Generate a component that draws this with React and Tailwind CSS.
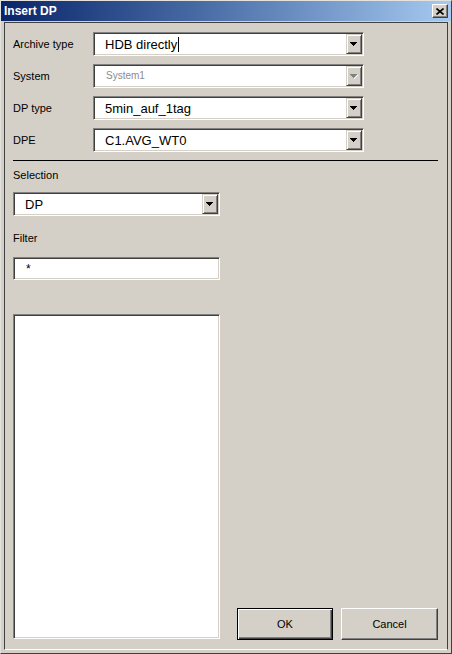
import React from 'react'

// sunken win2k field frame
const sunken =
  'border border-t-[#808080] border-l-[#808080] border-b-white border-r-white shadow-[inset_1px_1px_0_#404040,inset_-1px_-1px_0_#d4d0c8] bg-white p-[1px]'

function Arrow({ disabled }) {
  const c = disabled ? '#808080' : '#000000'
  return (
    <svg width="8" height="5" viewBox="0 0 8 5" shapeRendering="crispEdges">
      {disabled && (
        <g fill="#ffffff">
          <rect x="4" y="4" width="1" height="1" />
          <rect x="5" y="3" width="1" height="1" />
          <rect x="6" y="2" width="1" height="1" />
          <rect x="7" y="1" width="1" height="1" />
        </g>
      )}
      <g fill={c}>
        <rect x="0" y="0" width="7" height="1" />
        <rect x="1" y="1" width="5" height="1" />
        <rect x="2" y="2" width="3" height="1" />
        <rect x="3" y="3" width="1" height="1" />
      </g>
    </svg>
  )
}

function Combo({ className, children, disabled }) {
  return (
    <div className={`flex h-[24px] ${sunken} ${className}`}>
      <div className="flex-1 flex items-center min-w-0 overflow-hidden">{children}</div>
      <div className="w-[16px] h-full flex items-center justify-center bg-[#d4d0c8] border border-t-[#d4d0c8] border-l-[#d4d0c8] border-b-[#404040] border-r-[#404040] shadow-[inset_1px_1px_0_#ffffff,inset_-1px_-1px_0_#808080]">
        <Arrow disabled={disabled} />
      </div>
    </div>
  )
}

function Row({ label, children }) {
  return (
    <div className="flex items-center h-[24px]">
      <div className="w-[80px] text-[11px] leading-[13px] select-none">{label}</div>
      {children}
    </div>
  )
}

export default function App() {
  return (
    <div className="w-[452px] h-[654px] bg-[#d4d0c8] border border-t-[#e4e2dc] border-l-[#e4e2dc] border-r-[#404040] border-b-[#404040] flex flex-col font-['Liberation_Sans',Arial,sans-serif] text-black">
      {/* title bar */}
      <div className="h-[20px] flex items-center justify-between bg-gradient-to-r from-[#0a246a] to-[#a6caf0] pl-[3px] pr-[3px]">
        <span className="text-white text-[12px] font-bold leading-none select-none">Insert DP</span>
        <div className="w-[16px] h-[14px] flex items-center justify-center bg-[#d4d0c8] border border-t-white border-l-white border-b-[#404040] border-r-[#404040] shadow-[inset_-1px_-1px_0_#808080]">
          <svg width="8" height="7" viewBox="0 0 8 7">
            <path d="M0.5 0.5L7.5 6.5M7.5 0.5L0.5 6.5" stroke="#000" strokeWidth="1.6" />
          </svg>
        </div>
      </div>

      {/* body */}
      <div className="flex-1 mt-[1px] mx-[3px] mb-[3px] border border-t-[#404040] border-l-[#404040] border-r-[#404040] border-b-white flex flex-col pl-[8px] pt-[9px]">
        <div className="flex flex-col gap-[8px]">
          <Row label="Archive type">
            <Combo className="w-[271px]">
              <span className="pl-[10px] text-[13px] leading-none whitespace-nowrap">HDB directly</span>
              <span className="inline-block w-px h-[15px] bg-black ml-[1px]" />
            </Combo>
          </Row>
          <Row label="System">
            <Combo className="w-[271px]" disabled>
              <span className="pl-[11px] text-[10px] leading-none text-[#8c8c8c]">System1</span>
            </Combo>
          </Row>
          <Row label="DP type">
            <Combo className="w-[271px]">
              <span className="pl-[10px] text-[13px] leading-none">5min_auf_1tag</span>
            </Combo>
          </Row>
          <Row label="DPE">
            <Combo className="w-[271px]">
              <span className="pl-[10px] text-[13px] leading-none">C1.AVG_WT0</span>
            </Combo>
          </Row>
        </div>

        <div className="mt-[8px] h-px w-[425px] bg-black" />

        <div className="mt-[8px] h-[13px] text-[11px] leading-[13px] select-none">Selection</div>
        <Combo className="mt-[10px] w-[207px]">
          <span className="pl-[10px] text-[13px] leading-none">DP</span>
        </Combo>

        <div className="mt-[16px] h-[13px] text-[11px] leading-[13px] select-none">Filter</div>
        <div className={`mt-[12px] h-[23px] w-[207px] flex items-center ${sunken}`}>
          <span className="pl-[11px] text-[12px] leading-none">*</span>
        </div>

        <div className="mt-[34px] flex items-end">
          <div className={`w-[207px] h-[325px] ${sunken}`} />
          <div className="ml-[17px] mb-[-1px] flex gap-[8px] text-[11px]">
            <button className="w-[96px] h-[32px] bg-[#d4d0c8] border border-black shadow-[inset_1px_1px_0_#ffffff,inset_-1px_-1px_0_#404040,inset_-2px_-2px_0_#808080] flex items-center justify-center">
              OK
            </button>
            <button className="w-[97px] h-[32px] bg-[#d4d0c8] border border-t-white border-l-white border-b-[#404040] border-r-[#404040] shadow-[inset_-1px_-1px_0_#808080] flex items-center justify-center">
              Cancel
            </button>
          </div>
        </div>
      </div>
    </div>
  )
}
